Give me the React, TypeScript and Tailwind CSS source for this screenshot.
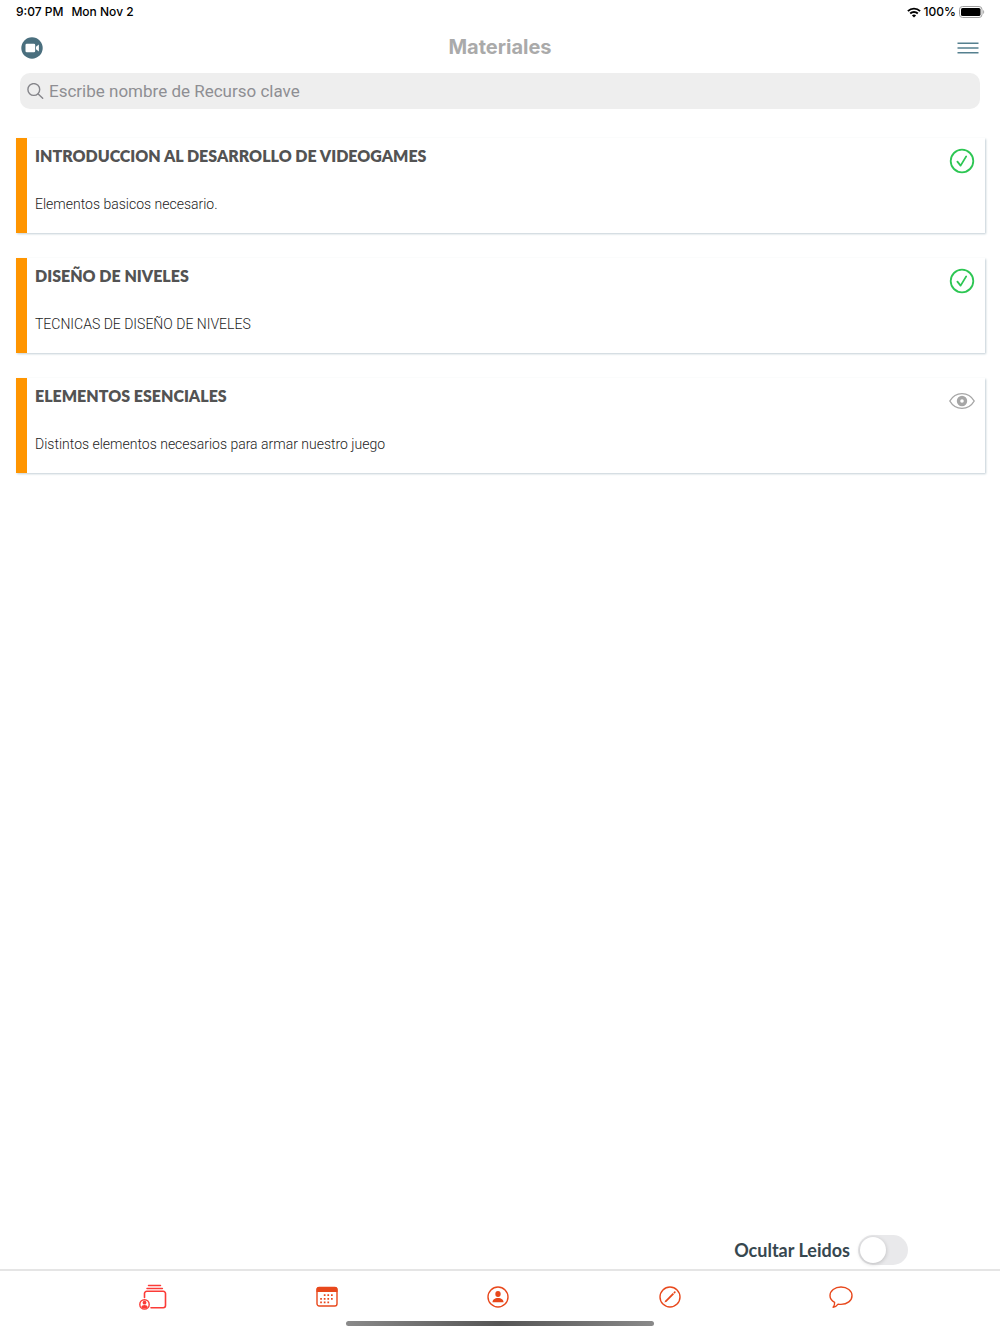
import { useState } from "react";
import type { ReactNode } from "react";

type Resource = { title: string; description: string; read: boolean };

const resources: Resource[] = [
  { title: "INTRODUCCION AL DESARROLLO DE VIDEOGAMES", description: "Elementos basicos necesario.", read: true },
  { title: "DISEÑO DE NIVELES", description: "TECNICAS DE DISEÑO DE NIVELES", read: true },
  { title: "ELEMENTOS ESENCIALES", description: "Distintos elementos necesarios para armar nuestro juego", read: false },
];

function WifiIcon() {
  return (
    <svg width="14" height="11" viewBox="0 0 14 11" fill="none" stroke="#000" strokeWidth="1.9" aria-label="Wi-Fi">
      <path d="M.9 4.1a8.7 8.7 0 0 1 12.2 0" />
      <path d="M3.2 6.5a5.4 5.4 0 0 1 7.6 0" />
      <path d="M7 10.6 4.9 8.5a3 3 0 0 1 4.2 0Z" fill="#000" stroke="none" />
    </svg>
  );
}

function BatteryIcon() {
  return (
    <svg width="26" height="12" viewBox="0 0 26 12" aria-label="Batería">
      <rect x=".5" y=".5" width="22.5" height="11" rx="3" fill="none" stroke="#a0a0a0" />
      <rect x="2" y="2" width="19.5" height="8" rx="1.6" fill="#000" />
      <path d="M24.2 4v4c1.300-.6 1.300-3.400 0-4Z" fill="#a0a0a0" />
    </svg>
  );
}

function VideoIcon() {
  return (
    <svg width="22" height="22" viewBox="0 0 22 22">
      <circle cx="11" cy="11" r="10.7" fill="#4a6f7e" />
      <rect x="4.5" y="6.7" width="9.7" height="8.600" rx="1.3" fill="#fff" />
      <path d="M15 9.800 17.900 7.600v6.800l-2.900-2.200Z" fill="#fff" />
    </svg>
  );
}

function MenuIcon() {
  return (
    <svg width="22" height="12" viewBox="0 0 22 12" stroke="#55808f" strokeWidth="1.4">
      <path d="M.5 1.300h21M.5 6h21M.5 10.700h21" />
    </svg>
  );
}

function SearchIcon() {
  return (
    <svg width="17" height="17" viewBox="0 0 17 17" fill="none" stroke="#85858a" strokeWidth="1.4" strokeLinecap="round">
      <circle cx="6.8" cy="6.5" r="5.9" />
      <path d="m11.200 10.900 4.500 4.400" />
    </svg>
  );
}

function CheckIcon() {
  return (
    <svg width="26" height="26" viewBox="0 0 26 26" fill="none" stroke="#2dc653" role="img" aria-label="Leído">
      <circle cx="13" cy="13" r="11.3" strokeWidth="1.8" />
      <path d="m8.400 13.600 3.200 4 5.600-9.200" strokeWidth="1.8" strokeLinecap="round" strokeLinejoin="round" />
    </svg>
  );
}

function EyeIcon() {
  return (
    <svg width="26" height="26" viewBox="0 0 26 26" fill="none" stroke="#a6a6a6" role="img" aria-label="No leído">
      <path d="M.8 13C3.600 8.200 8 5.600 13 5.600S22.400 8.200 25.200 13C22.400 17.800 18 20.400 13 20.400S3.600 17.800.8 13Z" strokeWidth="1.4" />
      <circle cx="13" cy="13" r="3.5" strokeWidth="3.4" />
    </svg>
  );
}

function CoursesIcon() {
  return (
    <svg width="34" height="28" viewBox="0 0 34 28" fill="none" stroke="#fb3b37">
      <path d="M9.500 2.400h12M8 5.400h15.400" strokeWidth="1.5" strokeLinecap="round" />
      <path d="M5.500 14.500V10.500a2.200 2.200 0 0 1 2.200-2.200h16.600a2.200 2.200 0 0 1 2.200 2.200v12a2.200 2.200 0 0 1-2.200 2.200H12" strokeWidth="1.6" strokeLinecap="round" />
      <circle cx="5.5" cy="21.400" r="4.7" strokeWidth="1.4" />
      <circle cx="5.5" cy="19.700" r="1.9" fill="#fb3b37" stroke="none" />
      <path d="M2.200 24.300c.3-1.700 1.700-2.400 3.300-2.400s3 .7 3.300 2.400c-1.800 1.700-4.800 1.700-6.600 0Z" fill="#fb3b37" stroke="none" />
    </svg>
  );
}

function CalendarIcon() {
  return (
    <svg width="22" height="22" viewBox="0 0 22 22">
      <rect x="1" y="1.5" width="20" height="18.5" rx="2.2" fill="none" stroke="#e8481c" strokeWidth="1.4" />
      <path d="M.5 6V3.500A2.500 2.500 0 0 1 3 1h16a2.500 2.500 0 0 1 2.500 2.500V6Z" fill="#e8481c" />
      <g stroke="#e8481c" strokeWidth="1.7" strokeDasharray="1.7 1.9">
        <path d="M7.800 9.200h9M4.200 12.800h12.600M4.200 16.400h9" />
      </g>
    </svg>
  );
}

function ProfileIcon() {
  return (
    <svg width="22" height="22" viewBox="0 0 22 22">
      <circle cx="11" cy="11" r="10" fill="none" stroke="#e8481c" strokeWidth="1.4" />
      <ellipse cx="11" cy="7.9" rx="2.7" ry="3" fill="#e8481c" />
      <path d="M5.500 16.200c0-2.700 2.200-4.300 5.500-4.300s5.500 1.600 5.500 4.300Z" fill="#e8481c" />
    </svg>
  );
}

function PencilIcon() {
  return (
    <svg width="22" height="22" viewBox="0 0 22 22" fill="none" stroke="#e8481c">
      <circle cx="11" cy="11" r="10" strokeWidth="1.4" />
      <path d="m6.700 15.300 7.700-7.700" strokeWidth="1.8" />
      <path d="m15.400 6.600.4-.4" strokeWidth="1.8" strokeLinecap="round" />
      <path d="m5.500 16.500 1.900-.7-1.200-1.200Z" fill="#e8481c" stroke="none" />
    </svg>
  );
}

function ChatIcon() {
  return (
    <svg width="24" height="24" viewBox="0 0 24 24" fill="none" stroke="#e8481c" strokeWidth="1.4" strokeLinejoin="round">
      <path d="M12 2C18.200 2 23 5.800 23 10.700S18.200 19.400 12 19.400c-1 0-2-.1-2.900-.3-1.200 1.700-2.800 2.800-5 3.100 1.200-1.300 1.700-2.900 1.500-4.800C2.800 15.800 1 13.400 1 10.700 1 5.800 5.800 2 12 2Z" />
    </svg>
  );
}

const tabs: { label: string; icon: ReactNode }[] = [
  { label: "Cursos", icon: <CoursesIcon /> },
  { label: "Calendario", icon: <CalendarIcon /> },
  { label: "Perfil", icon: <ProfileIcon /> },
  { label: "Tareas", icon: <PencilIcon /> },
  { label: "Mensajes", icon: <ChatIcon /> },
];

function ResourceCard({ title, description, read }: Resource) {
  return (
    <li className="flex h-[95px] items-start justify-between border-l-[11px] border-[#ff9500] bg-white pr-2.5 pl-2 shadow-[1px_1px_2px_#c3cfd6]">
      <div>
        <h2 className="pt-2 font-[Lato] text-base leading-5 font-extrabold text-[#535353]">{title}</h2>
        <p className="pt-7 font-[Roboto] text-sm leading-5 font-light text-[#1c1c1c]">{description}</p>
      </div>
      <span className="pt-2.5">{read ? <CheckIcon /> : <EyeIcon />}</span>
    </li>
  );
}

export default function App() {
  const [query, setQuery] = useState("");
  const [hideRead, setHideRead] = useState(false);
  const visible = resources.filter(
    (r) => r.title.toLowerCase().includes(query.toLowerCase()) && !(hideRead && r.read),
  );

  return (
    <div className="flex min-h-screen flex-col bg-white font-[Inter,sans-serif]">
      <div className="flex h-6 items-center justify-between pr-[15px] pl-4 text-xs font-medium text-black">
        <div className="flex gap-2">
          <span>9:07 PM</span>
          <span>Mon Nov 2</span>
        </div>
        <div className="flex items-center gap-[3px]">
          <WifiIcon />
          <span>100%</span>
          <BatteryIcon />
        </div>
      </div>

      <header className="grid h-12 grid-cols-[1fr_auto_1fr] items-center px-[21px]">
        <button type="button" aria-label="Videollamada" className="justify-self-start">
          <VideoIcon />
        </button>
        <h1 className="pb-0.5 text-xl leading-7 font-bold text-[#aaaaaa]">Materiales</h1>
        <button type="button" aria-label="Menú" className="justify-self-end">
          <MenuIcon />
        </button>
      </header>

      <label className="mx-5 mt-px flex h-9 items-center gap-[5px] rounded-[10px] bg-[#eeeeee] px-[7px]">
        <SearchIcon />
        <input
          type="text"
          aria-label="Buscar recurso"
          placeholder="Escribe nombre de Recurso clave"
          value={query}
          onChange={(e) => setQuery(e.target.value)}
          className="min-w-0 flex-1 bg-transparent font-[Roboto] text-[17px] leading-6 text-black outline-none placeholder:text-[#8e8e93]"
        />
      </label>

      <main className="flex-1 pt-[29px] pr-[15px] pl-4">
        <ul className="flex flex-col gap-[25px]">
          {visible.map((r) => (
            <ResourceCard key={r.title} {...r} />
          ))}
        </ul>
      </main>

      <label className="flex items-center gap-2 self-end pr-[92px] pb-1">
        <span className="font-[Lato] text-lg leading-6 font-bold text-[#37474f]">Ocultar Leidos</span>
        <input
          type="checkbox"
          role="switch"
          checked={hideRead}
          onChange={(e) => setHideRead(e.target.checked)}
          className="h-[30px] w-[50px] appearance-none rounded-full bg-[#e9e9eb] p-0.5 before:block before:size-[26px] before:rounded-full before:bg-white before:shadow-[0_1px_4px_#00000033] before:transition-transform checked:bg-[#34c759] checked:before:translate-x-5"
        />
      </label>

      <nav className="border-t-2 border-[#e5e5e5] pr-[73px] pl-[70px]">
        <ul className="grid h-[50px] grid-cols-5 pt-px">
          {tabs.map((tab) => (
            <li key={tab.label} className="flex items-center justify-center">
              <button type="button" aria-label={tab.label}>
                {tab.icon}
              </button>
            </li>
          ))}
        </ul>
      </nav>
      <div className="flex h-[13px] justify-center">
        <div className="h-[5px] w-[308px] rounded-full bg-linear-to-r from-[#8a8a8a] via-[#555555] to-[#8a8a8a]" />
      </div>
    </div>
  );
}
